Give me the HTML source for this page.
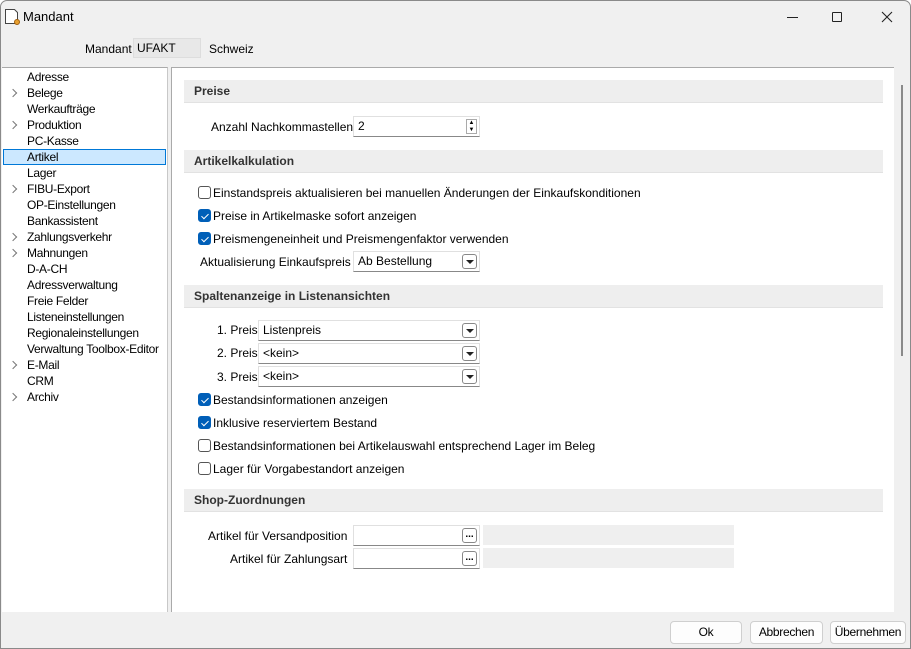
<!DOCTYPE html><html><head><style>
*{box-sizing:border-box}
body{margin:0;width:911px;height:649px;background:#fff;font-family:"Liberation Sans",sans-serif;font-size:12px;color:#000;overflow:hidden;position:relative}
.win{position:absolute;left:0;top:0;width:911px;height:649px;background:#f0f0f0;border:1px solid #8a8a8a;border-radius:7px 7px 0 0}
.a{position:absolute;white-space:nowrap}
.tree{position:absolute;left:1px;top:66px;width:166px;height:545px;background:#fff;border-right:1px solid #c8c8c8;border-top:1px solid #aaa}
.tree div{position:absolute;left:25px;height:16px;line-height:16px;letter-spacing:-0.3px}
.chev{position:absolute;left:8px;width:6px;height:6px;border-right:1.3px solid #777;border-top:1.3px solid #777;transform:rotate(45deg)}
.cont{position:absolute;left:170px;top:66px;width:723px;height:545px;background:#fff;border-top:1px solid #aaa;border-left:1px solid #aaa}
.hd{position:absolute;left:12px;width:699px;height:23px;background:#eeeeee;border-bottom:1px solid #e2e2e2;font-weight:bold;line-height:22px;padding-left:10px;color:#333}
.cb{position:absolute;left:26px;width:13px;height:13px;border:1px solid #555;border-radius:3px;background:#fff}
.cb.on{background:#005fb8;border-color:#005fb8}
.cb.on:after{content:"";position:absolute;left:3.5px;top:1.5px;width:3px;height:6px;border-right:1.3px solid #fff;border-bottom:1.3px solid #fff;transform:rotate(45deg)}
.lb{position:absolute;white-space:nowrap;line-height:16px}
.inp{position:absolute;background:#fff;border:1px solid #e0e0e0;border-bottom:1px solid #888;height:21px;line-height:19px;padding-left:4px}
.dd{position:absolute;right:2px;top:2px;width:15px;height:15px;border:1px solid #888;border-radius:3px;background:#fff}
.dd:after{content:"";position:absolute;left:3px;top:5px;border-left:4px solid transparent;border-right:4px solid transparent;border-top:4px solid #222}
.dots{position:absolute;right:2px;top:2px;width:15px;height:15px;border:1px solid #888;border-radius:3px;background:#fff;font-size:10px;line-height:12px;text-align:center;font-weight:bold}
.gray{position:absolute;background:#efefef;height:20px}
.btn{position:absolute;top:620px;height:23px;background:#fdfdfd;border:1px solid #cfcfcf;border-radius:4px;text-align:center;line-height:21px;letter-spacing:-0.3px}
</style></head><body><div class="win">
<svg class="a" style="left:3px;top:7px" width="18" height="18" viewBox="0 0 18 18"><path d="M1.5 1.5h9l3 3v11h-12z" fill="#fff" stroke="#444"/><circle cx="13" cy="14" r="2.5" fill="#e8a030" stroke="#a06010"/></svg>
<div class="a" style="left:22px;top:8px;font-size:13px">Mandant</div>
<div class="a" style="left:786px;top:16px;width:11px;border-top:1px solid #222"></div>
<div class="a" style="left:831px;top:11px;width:10px;height:10px;border:1px solid #222;border-radius:1px"></div>
<svg class="a" style="left:880px;top:10px" width="12" height="12"><path d="M1 1L11 11M11 1L1 11" stroke="#222" stroke-width="1.1"/></svg>
<div class="a" style="left:84px;top:41px">Mandant</div>
<div class="a" style="left:132px;top:37px;width:68px;height:20px;background:#e8e8e8;border:1px solid #ddd;padding:2px 3px">UFAKT</div>
<div class="a" style="left:208px;top:41px">Schweiz</div>
<div class="tree">
<div style="top:1px">Adresse</div>
<span class="chev" style="top:22px"></span><div style="top:17px">Belege</div>
<div style="top:33px">Werkaufträge</div>
<span class="chev" style="top:54px"></span><div style="top:49px">Produktion</div>
<div style="top:65px">PC-Kasse</div>
<span style="position:absolute;left:1px;top:81px;width:163px;height:16px;background:#cce8ff;border:1px solid #0078d7"></span><div style="top:81px">Artikel</div>
<div style="top:97px">Lager</div>
<span class="chev" style="top:118px"></span><div style="top:113px">FIBU-Export</div>
<div style="top:129px">OP-Einstellungen</div>
<div style="top:145px">Bankassistent</div>
<span class="chev" style="top:166px"></span><div style="top:161px">Zahlungsverkehr</div>
<span class="chev" style="top:182px"></span><div style="top:177px">Mahnungen</div>
<div style="top:193px">D-A-CH</div>
<div style="top:209px">Adressverwaltung</div>
<div style="top:225px">Freie Felder</div>
<div style="top:241px">Listeneinstellungen</div>
<div style="top:257px">Regionaleinstellungen</div>
<div style="top:273px">Verwaltung Toolbox-Editor</div>
<span class="chev" style="top:294px"></span><div style="top:289px">E-Mail</div>
<div style="top:305px">CRM</div>
<span class="chev" style="top:326px"></span><div style="top:321px">Archiv</div>
</div>
<div class="cont">
<div class="hd" style="top:12px">Preise</div>
<div class="lb" style="left:39px;top:51px">Anzahl Nachkommastellen</div>
<div class="inp" style="left:181px;top:48px;width:127px">2<span style="position:absolute;right:2px;top:2px;width:11px;height:15px;border:1px solid #aaa;font-size:6px;line-height:7px;text-align:center">▲<br>▼</span></div>
<div class="hd" style="top:82px">Artikelkalkulation</div>
<span class="cb" style="top:118px"></span><div class="lb" style="left:41px;top:117px">Einstandspreis aktualisieren bei manuellen Änderungen der Einkaufskonditionen</div>
<span class="cb on" style="top:141px"></span><div class="lb" style="left:41px;top:140px">Preise in Artikelmaske sofort anzeigen</div>
<span class="cb on" style="top:164px"></span><div class="lb" style="left:41px;top:163px">Preismengeneinheit und Preismengenfaktor verwenden</div>
<div class="lb" style="left:28px;top:186px">Aktualisierung Einkaufspreis</div>
<div class="inp" style="left:181px;top:183px;width:127px">Ab Bestellung<span class="dd"></span></div>
<div class="hd" style="top:217px">Spaltenanzeige in Listenansichten</div>
<div class="lb" style="left:45px;top:254px">1. Preis</div>
<div class="inp" style="left:86px;top:252px;width:222px">Listenpreis<span class="dd"></span></div>
<div class="lb" style="left:45px;top:277px">2. Preis</div>
<div class="inp" style="left:86px;top:275px;width:222px">&lt;kein&gt;<span class="dd"></span></div>
<div class="lb" style="left:45px;top:301px">3. Preis</div>
<div class="inp" style="left:86px;top:298px;width:222px">&lt;kein&gt;<span class="dd"></span></div>
<span class="cb on" style="top:325px"></span><div class="lb" style="left:41px;top:324px">Bestandsinformationen anzeigen</div>
<span class="cb on" style="top:348px"></span><div class="lb" style="left:41px;top:347px">Inklusive reserviertem Bestand</div>
<span class="cb" style="top:371px"></span><div class="lb" style="left:41px;top:370px">Bestandsinformationen bei Artikelauswahl entsprechend Lager im Beleg</div>
<span class="cb" style="top:394px"></span><div class="lb" style="left:41px;top:393px">Lager für Vorgabestandort anzeigen</div>
<div class="hd" style="top:421px">Shop-Zuordnungen</div>
<div class="lb" style="left:36px;top:460px">Artikel für Versandposition</div>
<div class="inp" style="left:181px;top:457px;width:127px"><span class="dots">...</span></div>
<div class="gray" style="left:311px;top:457px;width:251px"></div>
<div class="lb" style="left:58px;top:483px">Artikel für Zahlungsart</div>
<div class="inp" style="left:181px;top:480px;width:127px"><span class="dots">...</span></div>
<div class="gray" style="left:311px;top:480px;width:251px"></div>
</div>
<div class="a" style="left:900px;top:84px;width:2px;height:271px;background:#8a8a8a"></div>
<div class="btn" style="left:669px;width:72px">Ok</div>
<div class="btn" style="left:749px;width:73px">Abbrechen</div>
<div class="btn" style="left:829px;width:76px">Übernehmen</div>
</div></body></html>
